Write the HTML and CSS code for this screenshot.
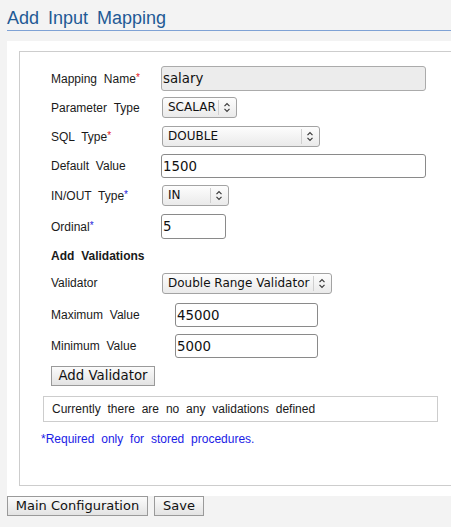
FILE: index.html
```html
<!DOCTYPE html>
<html>
<head>
<meta charset="utf-8">
<title>Add Input Mapping</title>
<link rel="stylesheet" href="styles.css">
</head>
<body>
<div class="page">
  <h1 class="title">Add Input Mapping</h1>
  <div class="panel">
    <div class="box">
      <div class="form">
        <div class="row r30"><span class="label">Mapping Name<span class="req">*</span></span><input class="input readonly w265" value="salary" readonly></div>
        <div class="row r29"><span class="label">Parameter Type</span>
          <div class="select w75"><span class="select-value">SCALAR</span><span class="select-arrow"><svg width="8" height="11" viewBox="0 0 8 11"><path d="M1.5 4.2 L4 1.7 L6.5 4.2 M1.5 6.8 L4 9.3 L6.5 6.8" fill="none" stroke="#3a3a3a" stroke-width="1.2"/></svg></span></div></div>
        <div class="row r29"><span class="label">SQL Type<span class="req">*</span></span>
          <div class="select w158"><span class="select-value">DOUBLE</span><span class="select-arrow"><svg width="8" height="11" viewBox="0 0 8 11"><path d="M1.5 4.2 L4 1.7 L6.5 4.2 M1.5 6.8 L4 9.3 L6.5 6.8" fill="none" stroke="#3a3a3a" stroke-width="1.2"/></svg></span></div></div>
        <div class="row r30"><span class="label">Default Value</span><input class="input h24 w265" value="1500"></div>
        <div class="row r29"><span class="label">IN/OUT Type<span class="req blue">*</span></span>
          <div class="select w67"><span class="select-value">IN</span><span class="select-arrow"><svg width="8" height="11" viewBox="0 0 8 11"><path d="M1.5 4.2 L4 1.7 L6.5 4.2 M1.5 6.8 L4 9.3 L6.5 6.8" fill="none" stroke="#3a3a3a" stroke-width="1.2"/></svg></span></div></div>
        <div class="row r32"><span class="label">Ordinal<span class="req blue">*</span></span><input class="input w65" value="5"></div>
        <div class="row r28"><span class="label bold">Add Validations</span></div>
        <div class="row r26"><span class="label">Validator</span>
          <div class="select w170"><span class="select-value">Double Range Validator</span><span class="select-arrow"><svg width="8" height="11" viewBox="0 0 8 11"><path d="M1.5 4.2 L4 1.7 L6.5 4.2 M1.5 6.8 L4 9.3 L6.5 6.8" fill="none" stroke="#3a3a3a" stroke-width="1.2"/></svg></span></div></div>
      </div>
      <div class="form nested">
        <div class="row r30"><span class="label">Maximum Value</span><input class="input h24 w143" value="45000"></div>
        <div class="row r32"><span class="label">Minimum Value</span><input class="input h24 w143" value="5000"></div>
      </div>
      <button class="btn add-btn" type="button">Add Validator</button>
      <div class="message">Currently there are no any validations defined</div>
      <p class="note">*Required only for stored procedures.</p>
    </div>
  </div>
  <div class="actions">
    <button class="btn main-btn" type="button">Main Configuration</button>
    <button class="btn save-btn" type="button">Save</button>
  </div>
</div>
</body>
</html>
```
FILE: styles.css
```css
html, body {
  margin: 0;
  padding: 0;
  overflow: hidden;
  background: #f3f3f3;
}

.page {
  width: 460px;
  font-family: "Liberation Sans", Arial, sans-serif;
  font-size: 12px;
  color: #1a1a1a;
  word-spacing: 3.5px;
}

.title {
  margin: 7px 0 0 7px;
  padding: 0 0 1px 0;
  height: 22px;
  line-height: 22px;
  font-size: 18px;
  font-weight: normal;
  color: #1f5a95;
  word-spacing: 4px;
  border-bottom: 1px solid #7fa2d5;
}

.panel {
  margin: 10px 0 0 7px;
  padding: 10px 0 10px 12px;
  background: #fff;
}

.box {
  border: 1px solid #cdcdcd;
  border-right: none;
  padding: 11px 0 35px 31px;
}

.form {
  display: flex;
  flex-direction: column;
}

.row {
  display: grid;
  grid-template-columns: 110px auto;
  align-items: center;
  justify-items: start;
}

.nested {
  margin-top: 4px;
}

.nested .row {
  grid-template-columns: 124px auto;
}

.r26 { height: 26px; }
.r28 { height: 28px; }
.r29 { height: 29px; }
.r30 { height: 30px; }
.r32 { height: 32px; }

.label {
  line-height: 16px;
}

.bold {
  font-weight: bold;
}

.req {
  color: #e2141b;
  font-size: 10px;
  vertical-align: 2px;
}

.req.blue {
  color: #1d1ddb;
}

.input {
  box-sizing: border-box;
  height: 25px;
  margin: 0;
  padding: 0 1px;
  border: 1px solid #8a8a8a;
  border-radius: 3px;
  background: #fff;
  font-family: "DejaVu Sans", sans-serif;
  font-size: 13.333px;
  color: #111;
  word-spacing: 0;
  outline: none;
}

.input.readonly {
  background: #ececec;
  border-color: #ababab;
}

.h24 { height: 24px; }
.w265 { width: 265px; }
.w65 { width: 65px; }
.w143 { width: 143px; }

.select {
  box-sizing: border-box;
  display: flex;
  align-items: stretch;
  height: 21px;
  margin-left: 1px;
  border: 1px solid #a3a3a3;
  border-radius: 3px;
  background: linear-gradient(#fdfdfd, #eaeaea);
  font-family: "DejaVu Sans", sans-serif;
  font-size: 12px;
  color: #111;
  word-spacing: 0;
}

.w75 { width: 75px; }
.w158 { width: 158px; }
.w67 { width: 67px; }
.w170 { width: 170px; }

.select-value {
  flex: 1;
  padding-left: 5px;
  line-height: 19px;
  white-space: nowrap;
  overflow: hidden;
}

.select-arrow {
  width: 18px;
  display: flex;
  align-items: center;
  justify-content: center;
  position: relative;
}

.select-arrow::before {
  content: "";
  position: absolute;
  left: 0;
  top: 2px;
  bottom: 2px;
  border-left: 1px solid #cfcfcf;
}

.btn {
  box-sizing: border-box;
  margin: 0;
  padding: 0;
  height: 20px;
  border: 1px solid #9a9a9a;
  border-radius: 0;
  background: linear-gradient(#fbfbfb, #e3e3e3);
  font-family: "DejaVu Sans", sans-serif;
  color: #111;
  word-spacing: 0;
  line-height: 18px;
}

.add-btn {
  display: block;
  margin-top: 4px;
  width: 104px;
  font-size: 13.333px;
}

.message {
  box-sizing: border-box;
  margin: 10px 0 0 -8px;
  width: 395px;
  height: 26px;
  line-height: 24px;
  padding-left: 8px;
  border: 1px solid #cdcdcd;
  font-size: 12px;
}

.note {
  margin: 6px 0 0 -10px;
  line-height: 22px;
  color: #1b1be6;
}

.actions {
  display: flex;
  gap: 6px;
  margin-left: 7px;
}

.main-btn {
  width: 141px;
  font-size: 13px;
}

.save-btn {
  width: 50px;
  font-size: 13px;
}
```
